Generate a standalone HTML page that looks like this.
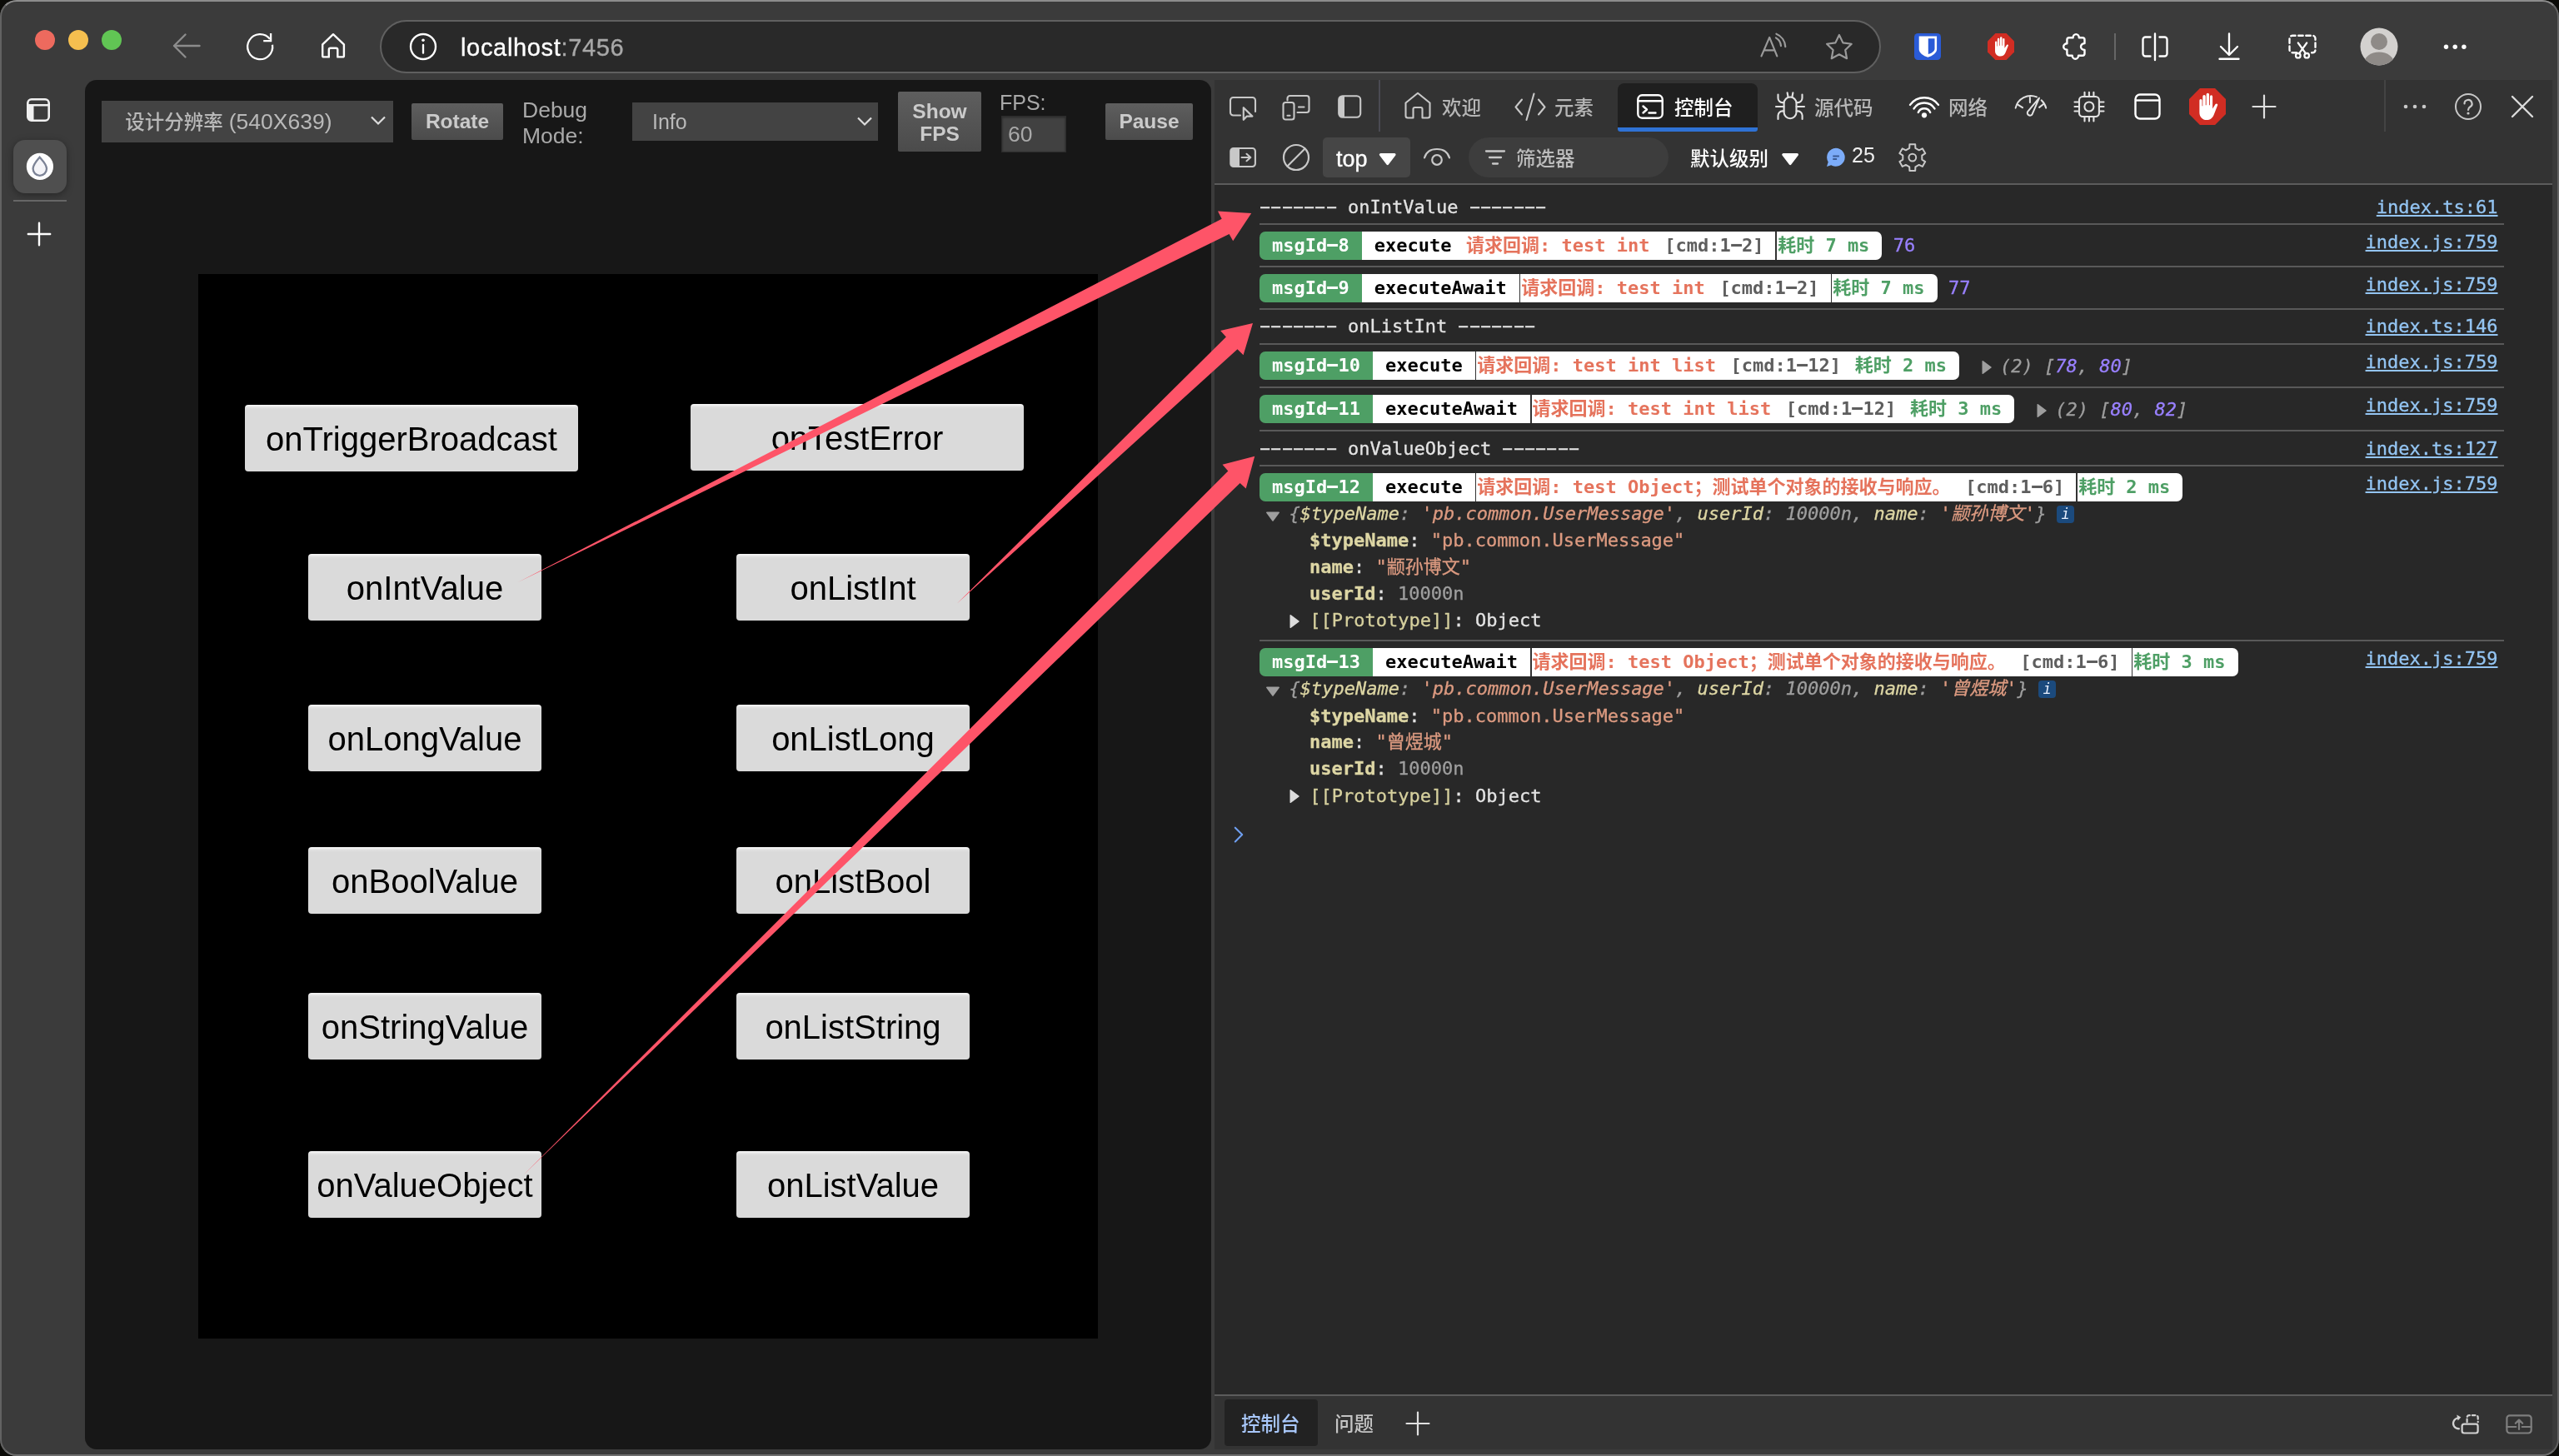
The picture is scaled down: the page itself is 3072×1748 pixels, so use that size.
<!DOCTYPE html>
<html lang="zh-CN">
<head>
<meta charset="utf-8">
<title>localhost:7456</title>
<style>
*{box-sizing:border-box;margin:0;padding:0}
html,body{width:3072px;height:1748px;overflow:hidden;background:#0b0b08}
body{position:relative;font-family:"Liberation Sans","Noto Sans CJK SC",sans-serif;color:#fff}
.abs{position:absolute}
#win{position:absolute;left:0;top:0;width:3072px;height:1748px;background:#3b3b3b;border-radius:20px;overflow:hidden}
#winborder{position:absolute;left:0;top:0;width:3072px;height:1748px;border-radius:20px;border:2px solid #626262;border-top-color:#8c8c8c;border-bottom-color:#6e6e6e;pointer-events:none;z-index:50}
/* ---------- browser chrome ---------- */
.tl{position:absolute;top:36px;width:24px;height:24px;border-radius:50%}
#urlbar{position:absolute;left:456px;top:24px;width:1802px;height:64px;border-radius:32px;background:#292929;border:2px solid #606060}
#urltext{position:absolute;will-change:transform;left:553px;top:36.600px;font-size:29px;line-height:40px;color:#fff;letter-spacing:.67px;-webkit-text-stroke:.35px currentColor}
#urltext span{color:#a8a8a8}
svg{position:absolute;overflow:visible}
.ic{fill:none;stroke:#fff;stroke-width:2.35;stroke-linecap:round;stroke-linejoin:round}
/* ---------- page ---------- */
#page{position:absolute;left:102px;top:96px;width:1352px;height:1644px;background:#171717;border-radius:14px;overflow:hidden}
#canvasbg{position:absolute;left:136px;top:233px;width:1080px;height:1278px;background:#000}
#canvas{position:absolute;left:136px;top:233.500px;width:1080px;height:1278px;will-change:transform}
.cbtn{position:absolute;height:80px;width:280px;background:linear-gradient(#f7f7f7 0,#f0f0f0 1.500px,#e0e0e0 3.500px,#dadada 6px,#dadada 100%);border-radius:4px;color:#000;font-size:40px;line-height:82px;text-align:center;font-family:"Liberation Sans",sans-serif;white-space:nowrap;overflow:hidden}
/* cocos toolbar */
.tb{position:absolute;will-change:transform;font-family:"Liberation Sans","Noto Sans CJK SC",sans-serif}
.tsel{background:#434343;color:#b9b9b9;font-size:25px}
.tbtn{background:linear-gradient(#5e5e5e,#4b4b4b);color:#cbcbcb;font-weight:bold;font-size:24.5px;text-align:center;border-radius:2px}
/* ---------- devtools ---------- */
#dt{position:absolute;left:1458px;top:96px;width:1606px;height:1644px;background:#282828;overflow:hidden}
#dttabs{position:absolute;left:0;top:0;width:100%;height:62px;background:#333}
#dtbar{position:absolute;left:0;top:62px;width:100%;height:64px;background:#333;border-bottom:2px solid #5c5c5c}
#dtbottom{position:absolute;left:0;top:1578px;width:100%;height:66px;background:#333;border-top:2px solid #5c5c5c}
.dtt{position:absolute;will-change:transform;font-size:23.5px;line-height:36px;margin-top:1.5px;font-weight:500;color:#c4c4c4;white-space:nowrap}
.dic{fill:none;stroke:#c8c8c8;stroke-width:2.1;stroke-linecap:round;stroke-linejoin:round}
/* console */
#con{position:absolute;left:0;top:0;width:100%;height:100%;will-change:transform;font-family:"DejaVu Sans Mono","Liberation Mono","Noto Sans CJK SC",monospace;font-size:22px;color:#e3e3e3}
.row{position:absolute;left:54px;width:1493px;border-bottom:2px solid #4a4a4a}
.ln{position:absolute;white-space:pre;line-height:32px;height:32px;-webkit-text-stroke:.3px currentColor}
.ln.b{-webkit-text-stroke:0}
.lk{color:#94c5f3;text-decoration:underline;white-space:pre;line-height:32px}
.b{font-weight:bold}
.hy{display:inline-block;transform:translateY(-0.600px) scaleX(1.900)}
.ibadge{width:21px;height:21px;border-radius:4px;background:#1b4a7d;color:#e8f0ff;font-style:italic;font-size:17px;line-height:21px;text-align:center;font-family:"DejaVu Sans Mono","Liberation Mono",monospace}
</style>
</head>
<body>
<div id="win">
<!-- CHROME -->
<div id="chrome">
<div class="tl" style="left:42px;background:#ed6a5e"></div>
<div class="tl" style="left:82px;background:#f5bf4f"></div>
<div class="tl" style="left:122px;background:#61c554"></div>
<svg style="left:200px;top:32px" width="48" height="48" viewBox="0 0 48 48"><path class="ic" style="stroke:#8c8c8c;stroke-width:2.4" d="M39.5 23H9M22.5 9.5L9 23l13.500 13.500"/></svg>
<svg style="left:288px;top:32px" width="48" height="48" viewBox="0 0 48 48"><path class="ic" style="stroke-width:2.300;stroke-linecap:butt;stroke-linejoin:miter" d="M39 21.800A15 15 0 1 1 36 14.900M37.100 8V17.100H28.200"/></svg>
<svg style="left:376px;top:32px" width="48" height="48" viewBox="0 0 48 48"><path class="ic" style="stroke-width:2.400" d="M11.200 21.300L24 9.200L36.900 21.300V34.900a1.500 1.500 0 0 1-1.500 1.500H29.300V27.800a2 2 0 0 0-2-2h-6.500a2 2 0 0 0-2 2V36.400H12.700a1.500 1.500 0 0 1-1.500-1.500Z"/></svg>
<div id="urlbar"></div>
<svg style="left:484px;top:32px" width="48" height="48" viewBox="0 0 48 48"><circle class="ic" cx="24" cy="24" r="15"/><path class="ic" d="M24 22v9.500"/><circle cx="24" cy="16.300" r="1.800" fill="#fff"/></svg>
<div id="urltext">localhost<span>:7456</span></div>
<!-- read aloud -->
<svg style="left:2104px;top:32px" width="48" height="48" viewBox="0 0 48 48"><path class="ic" style="stroke:#9a9a9a;stroke-width:2.200" d="M10.500 35.400L20.200 12.900L29.300 35.400M13.800 28.400H26.500M27.900 13.400A12.500 12.500 0 0 1 34 23.200M28.400 8.700A17.400 17.400 0 0 1 39.300 24.100"/></svg>
<!-- star -->
<svg style="left:2184px;top:32px" width="48" height="48" viewBox="0 0 48 48"><path class="ic" style="stroke:#9a9a9a;stroke-width:2.200" d="M23.90 10.00L28.43 19.37L38.74 20.78L31.22 27.98L33.07 38.22L23.90 33.30L14.73 38.22L16.58 27.98L9.06 20.78L19.37 19.37Z"/></svg>
<!-- bitwarden -->
<svg style="left:2298px;top:40px" width="32" height="32" viewBox="0 0 32 32"><rect width="32" height="32" rx="4.500" fill="#2a5bd7"/><path d="M5.700 3.500H27.100V19c0 4.500-5 8-10.700 9.800C10.700 27 5.700 23.500 5.700 19Z" fill="#fff"/><path d="M16.800 6.300H24.500V18.500c0 2.800-3.300 5.300-7.700 6.600Z" fill="#2a5bd7"/></svg>
<!-- adblock -->
<svg style="left:2386px;top:40px" width="32" height="32" viewBox="0 0 32 32"><path d="M9.400 0h13.200L32 9.400v13.200L22.600 32H9.400L0 22.600V9.400z" fill="#d12d23"/><path d="M9 16.500V10.600a1.150 1.150 0 0 1 2.300 0V15.500h.55V7a1.250 1.250 0 0 1 2.500 0V14.800h.65V5.400a1.250 1.250 0 0 1 2.500 0V14.800h.65V7.200a1.150 1.150 0 0 1 2.300 0V17.800l2.500-3.900c.7-1 2.400-.4 1.900.9L21.600 23c-1.200 3-3.300 4.600-6.400 4.600-3.600 0-6.200-2.700-6.200-6.600z" fill="#fff"/></svg>
<!-- puzzle -->
<svg style="left:2466px;top:32px" width="48" height="48" viewBox="0 0 48 48"><path class="ic" style="stroke-width:2.400" d="M17.900 13.300H22.600A3.600 4.200 0 0 1 29.800 13.300H34a2.500 2.500 0 0 1 2.500 2.500V20.100A4.500 3.900 0 0 0 36.500 27.900V32.200a2.500 2.500 0 0 1-2.500 2.500H29.100A3.700 4 0 0 1 21.700 34.700H17.900a2.500 2.500 0 0 1-2.500-2.500V27.600A4.200 3.700 0 0 1 15.400 20.200V15.800a2.500 2.500 0 0 1 2.500-2.500Z"/></svg>
<div class="abs" style="left:2538px;top:40px;width:2px;height:32px;background:#666"></div>
<!-- split -->
<svg style="left:2563px;top:32px" width="48" height="48" viewBox="0 0 48 48"><path class="ic" d="M18.500 12.500h-6a3 3 0 0 0-3 3v17a3 3 0 0 0 3 3h6M29.500 12.500h6a3 3 0 0 1 3 3v17a3 3 0 0 1-3 3h-6M24 8.500v31.500"/></svg>
<!-- download -->
<svg style="left:2652px;top:32px" width="48" height="48" viewBox="0 0 48 48"><path class="ic" d="M24 8.500v25M14 24l10 10 10-10M12.500 38.700h23"/></svg>
<!-- screenshot -->
<svg style="left:2740px;top:32px" width="48" height="48" viewBox="0 0 48 48"><path class="ic" stroke-dasharray="5.500 3.600" d="M17 31.200h-5a3.500 3.500 0 0 1-3.500-3.500v-13.500a3.500 3.500 0 0 1 3.500-3.500h24a3.500 3.500 0 0 1 3.500 3.500v13.500a3.500 3.500 0 0 1-3.500 3.500h-4"/><path class="ic" style="stroke-width:2.200" d="M18.800 19.500l9.300 12.800M29.200 19.500l-9.300 12.800"/><circle class="ic" style="stroke-width:2.200" cx="18.800" cy="34.700" r="2.800"/><circle class="ic" style="stroke-width:2.200" cx="29.200" cy="34.700" r="2.800"/></svg>
<!-- profile -->
<svg style="left:2833px;top:33px" width="46" height="46" viewBox="0 0 46 46"><defs><clipPath id="pc"><circle cx="23" cy="23" r="22.500"/></clipPath></defs><circle cx="23" cy="23" r="22.500" fill="#d3d1cf"/><g clip-path="url(#pc)" fill="#8e8a87"><circle cx="23" cy="17" r="10"/><ellipse cx="23" cy="44" rx="18.500" ry="14.500"/></g></svg>
<svg style="left:2923px;top:32px" width="48" height="48" viewBox="0 0 48 48"><circle cx="13.500" cy="24.200" r="2.700" fill="#fff"/><circle cx="24.200" cy="24.200" r="2.700" fill="#fff"/><circle cx="34.900" cy="24.200" r="2.700" fill="#fff"/></svg>
</div>
<!-- SIDEBAR -->
<div id="side">
<svg style="left:32px;top:118px" width="28" height="28" viewBox="0 0 28 28"><rect x="1.300" y="1.300" width="25.400" height="25.400" rx="4.500" fill="none" stroke="#f0f0f0" stroke-width="2.600"/><path d="M1.300 8.300h25.400" stroke="#f0f0f0" stroke-width="2.600"/><path d="M1.300 8.300h7.200v18.400H5.800a4.500 4.500 0 0 1-4.500-4.500z" fill="#f0f0f0"/></svg>
<div class="abs" style="left:16px;top:168px;width:64px;height:64px;border-radius:14px;background:#4f4f4f;box-shadow:0 2px 8px rgba(0,0,0,.35)"></div>
<svg style="left:32px;top:184px" width="32" height="32" viewBox="0 0 32 32"><circle cx="15.900" cy="15.900" r="16.100" fill="#fdfdfe"/><path d="M15.600 4.800C19.500 9.300 24 13.600 24 18.600a8.200 8.200 0 0 1-16.400 0C7.600 13.600 11.700 9.300 15.600 4.800z" fill="#f4f4f8" stroke="#7c8396" stroke-width="2.300"/></svg>
<div class="abs" style="left:16px;top:240px;width:64px;height:2px;background:#666"></div>
<svg style="left:33px;top:267px" width="28" height="28" viewBox="0 0 28 28"><path d="M14 0.800v26.400M0.800 14h26.400" stroke="#fff" stroke-width="2.400" stroke-linecap="round"/></svg>
</div>
<!-- PAGE -->
<div id="page">
<div id="ctool">
<div class="tb tsel" style="left:20px;top:25px;width:350px;height:50px;line-height:50px;padding-left:28.300px;white-space:nowrap"><span style="font-size:23.500px;font-weight:500">设计分辨率</span> <span style="font-size:26.500px">(540X639)</span></div>
<svg style="left:342px;top:42px" width="20" height="14" viewBox="0 0 20 14"><path d="M2 2.500l8 8 8-8" fill="none" stroke="#ddd" stroke-width="2.200"/></svg>
<div class="tb tbtn" style="left:392px;top:28px;width:110px;height:44px;line-height:44px">Rotate</div>
<div class="tb" style="left:525px;top:21px;font-size:26.500px;line-height:30.500px;color:#a9a9a9">Debug<br>Mode:</div>
<div class="tb tsel" style="left:657px;top:27px;width:295px;height:46px;line-height:46px;padding-left:24px">Info</div>
<svg style="left:926px;top:43px" width="20" height="14" viewBox="0 0 20 14"><path d="M2 2.500l8 8 8-8" fill="none" stroke="#ddd" stroke-width="2.200"/></svg>
<div class="tb tbtn" style="left:976px;top:14px;width:100px;height:72px;line-height:27px;padding-top:9.500px">Show<br>FPS</div>
<div class="tb" style="left:1098px;top:12px;font-size:25px;line-height:30px;color:#a9a9a9">FPS:</div>
<div class="tb" style="left:1100px;top:43px;width:78px;height:44px;background:#414141;border:1px solid #2c2c2c;box-shadow:inset 0 1px 3px rgba(0,0,0,.4);color:#a9a9a9;font-size:26.500px;line-height:42px;padding-left:7px">60</div>
<div class="tb tbtn" style="left:1225px;top:28px;width:105px;height:44px;line-height:44px">Pause</div>
</div>
<div id="canvasbg"></div>
<div id="canvas">
<div class="cbtn" style="left:56px;top:156px;width:400px">onTriggerBroadcast</div>
<div class="cbtn" style="left:591px;top:155px;width:400px">onTestError</div>
<div class="cbtn" style="left:132px;top:335px;width:280px">onIntValue</div>
<div class="cbtn" style="left:646px;top:335px;width:280px">onListInt</div>
<div class="cbtn" style="left:132px;top:516px;width:280px">onLongValue</div>
<div class="cbtn" style="left:646px;top:516px;width:280px">onListLong</div>
<div class="cbtn" style="left:132px;top:687px;width:280px">onBoolValue</div>
<div class="cbtn" style="left:646px;top:687px;width:280px">onListBool</div>
<div class="cbtn" style="left:132px;top:862px;width:280px">onStringValue</div>
<div class="cbtn" style="left:646px;top:862px;width:280px">onListString</div>
<div class="cbtn" style="left:132px;top:1052px;width:280px">onValueObject</div>
<div class="cbtn" style="left:646px;top:1052px;width:280px">onListValue</div>
</div>
</div>
<!-- DEVTOOLS -->
<div id="dt">
<div id="dttabs">
<svg style="left:16px;top:16px" width="36" height="36" viewBox="0 0 36 36"><path class="dic" d="M15 26.500H6.500a3.500 3.500 0 0 1-3.500-3.500V8.500a3.500 3.500 0 0 1 3.500-3.500h23a3.500 3.500 0 0 1 3.500 3.500V22"/><path class="dic" style="stroke-width:2.200" d="M18.800 17.200v14.600l4-4.200h6.600z"/></svg>
<svg style="left:80px;top:16px" width="36" height="36" viewBox="0 0 36 36"><path class="dic" d="M7.500 8.500V6a3 3 0 0 1 3-3h20a3 3 0 0 1 3 3v14a3 3 0 0 1-3 3H19.500M21 16.500h6.500"/><rect class="dic" x="2.500" y="11" width="13" height="20.500" rx="2.800"/><path class="dic" d="M7.500 26.800h3"/></svg>
<svg style="left:146px;top:16px" width="32" height="32" viewBox="0 0 32 32"><rect class="dic" x="3.200" y="3.200" width="26" height="25.600" rx="4.500"/><path d="M3.200 7.700a4.500 4.500 0 0 1 4.500-4.500h2.300v25.600H7.700a4.500 4.500 0 0 1-4.500-4.500z" fill="#c8c8c8"/></svg>
<div class="abs" style="left:197px;top:0;width:2px;height:62px;background:#4a4a52"></div>
<svg style="left:226px;top:12px" width="36" height="36" viewBox="0 0 36 36"><path class="dic" d="M3.500 15.500L18 3.800l14.500 11.700V31a2.500 2.500 0 0 1-2.500 2.500h-6.500V23a2 2 0 0 0-2-2h-7a2 2 0 0 0-2 2v10.500H6A2.500 2.500 0 0 1 3.500 31z"/></svg>
<div class="dtt" style="left:273px;top:14px;font-size:23.5px;color:#b6b6b6;">欢迎</div>
<svg style="left:359px;top:14px" width="40" height="36" viewBox="0 0 40 36"><path class="dic" d="M10 9.500L2.500 18.500l7.500 9M30 9.500l7.500 9-7.500 9M24.500 2.500L15.500 34"/></svg>
<div class="dtt" style="left:408px;top:14px;font-size:23.5px;color:#b6b6b6;">元素</div>
<div class="abs" style="left:484px;top:4px;width:168px;height:58px;background:#1f1f1f;border-radius:8px 8px 3px 3px;overflow:hidden"><div class="abs" style="left:0;bottom:0;width:100%;height:5px;background:#2f72d4"></div></div>
<svg style="left:506px;top:16px" width="34" height="32" viewBox="0 0 34 32"><rect x="2.300" y="2.300" width="29.400" height="27.400" rx="5" fill="none" stroke="#fff" stroke-width="2.400"/><path d="M2.300 9.300h29.400M8.500 15.500l4.500 4-4.500 4M15.500 23.500h8" fill="none" stroke="#fff" stroke-width="2.400" stroke-linecap="round" stroke-linejoin="round"/></svg>
<div class="dtt" style="left:552px;top:14px;font-size:23.5px;color:#fff;">控制台</div>
<svg style="left:672px;top:14px" width="38" height="36" viewBox="0 0 38 36"><g fill="none" stroke="#e2e2e2" stroke-width="2.100" stroke-linecap="round" stroke-linejoin="round"><rect x="11.600" y="6.500" width="14.900" height="25.700" rx="7.450"/><path d="M15.600 1.200L16.500 6M22.400 1.200L21.500 6M4.500 3.500V7.800a5.300 5.300 0 0 0 5.300 5.300H11.500M33.500 3.500V7.800a5.300 5.300 0 0 1-5.300 5.300H26.600M2 18H11.500M26.600 18H36M11.500 23.400H9.800a5.300 5.300 0 0 0-5.300 5.300V33M26.600 23.400h1.700a5.300 5.300 0 0 1 5.300 5.300V33"/></g></svg>
<div class="dtt" style="left:720px;top:14px;font-size:23.5px;color:#b6b6b6;">源代码</div>
<svg style="left:832px;top:16px" width="40" height="32" viewBox="0 0 40 32"><path fill="none" stroke="#fff" stroke-width="2.400" stroke-linecap="round" d="M3.01 13.86A21 21 0 0 1 36.99 13.86M7.53 18.41A14.7 14.7 0 0 1 32.47 18.41M12.78 22.99A7.9 7.9 0 0 1 27.22 22.99"/><circle cx="20" cy="26.300" r="3.100" fill="#fff"/></svg>
<div class="dtt" style="left:881px;top:14px;font-size:23.5px;color:#b6b6b6;">网络</div>
<svg style="left:960px;top:16px" width="40" height="30" viewBox="0 0 40 30"><g fill="none" stroke="#e2e2e2" stroke-width="2" stroke-linecap="round" stroke-linejoin="round"><path d="M1.650 17.650A18.660 18.660 0 0 1 27 4.400M32.600 8.300A18.660 18.660 0 0 1 38.200 17.650M4.700 13.800L10 17.100M18.900 4.700V11M30.100 16.900L35.400 12.800"/><path d="M30 5.600L16.300 21.800A3.100 3.100 0 1 0 21.600 25.200Z"/></g></svg>
<svg style="left:1031px;top:13px" width="38" height="38" viewBox="0 0 38 38"><g fill="none" stroke="#e2e2e2" stroke-width="2.100" stroke-linecap="round"><rect x="7" y="7" width="23.900" height="24" rx="4.200"/><circle cx="18.900" cy="19" r="5.500"/><path d="M13.500 6V1.800M18.900 6V1.800M24.400 6V1.800M13.500 36.400V32M18.900 36.400V32M24.400 36.400V32M6 13.500H1.500M6 19H1.500M6 24.500H1.500M36.500 13.500H32M36.500 19H32M36.500 24.500H32"/></g></svg>
<svg style="left:1103px;top:15px" width="34" height="34" viewBox="0 0 34 34"><rect x="2.500" y="2.500" width="29" height="29" rx="5.500" fill="none" stroke="#fff" stroke-width="2.400"/><path d="M2.500 9.500h29" stroke="#fff" stroke-width="2.400"/></svg>
<svg style="left:1170px;top:10px" width="44" height="44" viewBox="0 0 32 32"><path d="M9.400 0h13.200L32 9.400v13.200L22.600 32H9.400L0 22.600V9.400z" fill="#d12d23"/><path d="M9 16.500V10.600a1.150 1.150 0 0 1 2.300 0V15.500h.55V7a1.250 1.250 0 0 1 2.500 0V14.800h.65V5.400a1.250 1.250 0 0 1 2.500 0V14.800h.65V7.200a1.150 1.150 0 0 1 2.300 0V17.800l2.500-3.900c.7-1 2.400-.4 1.900.9L21.600 23c-1.200 3-3.300 4.600-6.400 4.600-3.600 0-6.200-2.700-6.200-6.600z" fill="#fff"/></svg>
<svg style="left:1245px;top:17px" width="30" height="30" viewBox="0 0 30 30"><path d="M15 1.500v27M1.500 15h27" stroke="#e0e0e0" stroke-width="2.200" stroke-linecap="round"/></svg>
<div class="abs" style="left:1404px;top:0;width:2px;height:62px;background:#444"></div>
<svg style="left:1426px;top:22px" width="30" height="20" viewBox="0 0 30 20"><circle cx="4" cy="10" r="2.300" fill="#c8c8c8"/><circle cx="15" cy="10" r="2.300" fill="#c8c8c8"/><circle cx="26" cy="10" r="2.300" fill="#c8c8c8"/></svg>
<svg style="left:1488px;top:15px" width="34" height="34" viewBox="0 0 34 34"><circle class="dic" style="stroke-width:2" cx="17" cy="17" r="15"/><path class="dic" style="stroke-width:2.200" d="M12.500 13.500a4.500 4.500 0 1 1 6.800 3.800c-1.600 1-2.300 1.800-2.300 3.700"/><circle cx="17" cy="25" r="1.600" fill="#c8c8c8"/></svg>
<svg style="left:1555px;top:18px" width="28" height="28" viewBox="0 0 28 28"><path d="M3 2l24 24M27 2L3 26" stroke="#dcdcdc" stroke-width="2.400" stroke-linecap="round"/></svg>
</div>
<div id="dtbar">
<svg style="left:16px;top:16px" width="36" height="30" viewBox="0 0 36 30"><rect class="dic" x="3.300" y="4" width="29.600" height="22" rx="3.500"/><path d="M3.300 7.500a3.500 3.500 0 0 1 3.500-3.500H14v22H6.800a3.500 3.500 0 0 1-3.500-3.500z" fill="#c8c8c8"/><path class="dic" d="M16.500 15h10.500M22.500 10.800L27.300 15l-4.800 4.200"/></svg>
<svg style="left:80px;top:13px" width="36" height="36" viewBox="0 0 36 36"><circle class="dic" style="stroke-width:2.200" cx="18" cy="18" r="15"/><path class="dic" style="stroke-width:2.200" d="M7.500 28.500L28.500 7.500"/></svg>
<div class="abs" style="left:130px;top:7px;width:105px;height:48px;background:#464646;border-radius:5px"></div>
<div class="dtt" style="left:146px;top:13px;font-size:27px;line-height:36px;color:#fff;-webkit-text-stroke:.35px #fff">top</div>
<svg style="left:196px;top:25px" width="24" height="18" viewBox="0 0 24 18"><path d="M3.300 2.600h16.800l-8.400 11z" fill="#fff" stroke="#fff" stroke-width="3" stroke-linejoin="round"/></svg>
<svg style="left:249px;top:16px" width="36" height="30" viewBox="0 0 36 30"><path class="dic" style="stroke-width:2.200" d="M3 15.500C5 8.500 11 5 18 5s13 3.500 15 10.500"/><circle class="dic" style="stroke-width:2.200" cx="18" cy="18" r="5.800"/></svg>
<div class="abs" style="left:305px;top:7px;width:240px;height:48px;background:#3d3d3d;border-radius:24px"></div>
<svg style="left:324px;top:18px" width="26" height="26" viewBox="0 0 26 26"><path class="dic" style="stroke-width:2.300" d="M2 5.500h22M6 13h14M10 20.500h6"/></svg>
<div class="dtt" style="left:362px;top:13px;color:#bcbcbc">筛选器</div>
<div class="dtt" style="left:571px;top:13px;color:#fff">默认级别</div>
<svg style="left:679px;top:25px" width="24" height="18" viewBox="0 0 24 18"><path d="M3.700 2.600h16.800l-8.400 11z" fill="#fff" stroke="#fff" stroke-width="3" stroke-linejoin="round"/></svg>
<svg style="left:733px;top:18px" width="26" height="26" viewBox="0 0 26 26"><path d="M12.800 1.800a11 11 0 1 1-5.600 20.500L2 24l1.700-5.500A11 11 0 0 1 12.800 1.800z" fill="#7cacf8"/><path d="M9.300 11.500h7.600M9.300 15h4.800" stroke="#3b5b93" stroke-width="1.800"/></svg>
<div class="dtt" style="left:765px;top:8.5px;font-size:25px;color:#efefef">25</div>
<svg style="left:818px;top:11px" width="40" height="40" viewBox="0 0 40 40"><path class="dic" style="stroke-width:2" d="M16.2 8.9L16.4 4.3L23.2 4.3L23.4 8.9L27.7 11.3L31.8 9.3L35.2 15.1L31.3 17.6L31.3 22.6L35.2 25.1L31.8 30.9L27.7 28.9L23.4 31.3L23.2 35.9L16.4 35.9L16.2 31.3L11.9 28.9L7.8 30.9L4.4 25.1L8.3 22.6L8.3 17.6L4.4 15.1L7.8 9.3L11.9 11.3z"/><circle class="dic" style="stroke-width:2" cx="19.800" cy="20.100" r="4.400"/></svg>
</div>
<div id="con">
<span class="ln " style="left:54.00px;top:136.50px;"><span class="hy">-</span><span class="hy">-</span><span class="hy">-</span><span class="hy">-</span><span class="hy">-</span><span class="hy">-</span><span class="hy">-</span> onIntValue <span class="hy">-</span><span class="hy">-</span><span class="hy">-</span><span class="hy">-</span><span class="hy">-</span><span class="hy">-</span><span class="hy">-</span></span>
<span class="ln lk" style="left:1394.82px;top:136.50px;">index.ts:61</span>
<div class="abs" style="left:54.00px;top:172.00px;width:1494.00px;height:2.00px;background:#595959"></div>
<div class="abs" style="left:54.00px;top:182.00px;width:124.71px;height:34.00px;background:#4e9f65;border-radius:7px 0 0 7px"></div>
<span class="ln b" style="left:69.00px;top:182.90px;color:#fff">msgId<span class="hy">-</span>8</span>
<div class="abs" style="left:176.71px;top:182.00px;width:624.64px;height:34.00px;background:#fff;border-radius:0 7px 7px 0"></div>
<span class="ln b" style="left:191.71px;top:182.90px;color:#000">execute</span>
<span class="ln b" style="left:302.12px;top:182.90px;color:#e5735c">请求回调: test int</span>
<span class="ln b" style="left:540.16px;top:182.90px;color:#5e5e5e">[cmd:1<span class="hy">-</span>2]</span>
<div class="abs" style="left:673.45px;top:182.00px;width:1.30px;height:34.00px;background:#333"></div>
<span class="ln b" style="left:676.15px;top:182.90px;color:#4e9f65">耗时 7 ms</span>
<span class="ln lk" style="left:1381.57px;top:178.60px;">index.js:759</span>
<span class="ln " style="left:814.85px;top:182.90px;color:#9980ff">76</span>
<div class="abs" style="left:54.00px;top:223.00px;width:1494.00px;height:2.00px;background:#595959"></div>
<div class="abs" style="left:54.00px;top:233.00px;width:124.71px;height:34.00px;background:#4e9f65;border-radius:7px 0 0 7px"></div>
<span class="ln b" style="left:69.00px;top:233.90px;color:#fff">msgId<span class="hy">-</span>9</span>
<div class="abs" style="left:176.71px;top:233.00px;width:690.86px;height:34.00px;background:#fff;border-radius:0 7px 7px 0"></div>
<span class="ln b" style="left:191.71px;top:233.90px;color:#000">executeAwait</span>
<div class="abs" style="left:366.14px;top:233.00px;width:1.30px;height:34.00px;background:#333"></div>
<span class="ln b" style="left:368.34px;top:233.90px;color:#e5735c">请求回调: test int</span>
<span class="ln b" style="left:606.38px;top:233.90px;color:#5e5e5e">[cmd:1<span class="hy">-</span>2]</span>
<div class="abs" style="left:739.67px;top:233.00px;width:1.30px;height:34.00px;background:#333"></div>
<span class="ln b" style="left:742.37px;top:233.90px;color:#4e9f65">耗时 7 ms</span>
<span class="ln lk" style="left:1381.57px;top:229.60px;">index.js:759</span>
<span class="ln " style="left:881.07px;top:233.90px;color:#9980ff">77</span>
<div class="abs" style="left:54.00px;top:274.00px;width:1494.00px;height:2.00px;background:#595959"></div>
<span class="ln " style="left:54.00px;top:279.75px;"><span class="hy">-</span><span class="hy">-</span><span class="hy">-</span><span class="hy">-</span><span class="hy">-</span><span class="hy">-</span><span class="hy">-</span> onListInt <span class="hy">-</span><span class="hy">-</span><span class="hy">-</span><span class="hy">-</span><span class="hy">-</span><span class="hy">-</span><span class="hy">-</span></span>
<span class="ln lk" style="left:1381.57px;top:279.75px;">index.ts:146</span>
<div class="abs" style="left:54.00px;top:316.00px;width:1494.00px;height:2.00px;background:#595959"></div>
<div class="abs" style="left:54.00px;top:326.00px;width:137.95px;height:34.00px;background:#4e9f65;border-radius:7px 0 0 7px"></div>
<span class="ln b" style="left:69.00px;top:326.90px;color:#fff">msgId<span class="hy">-</span>10</span>
<div class="abs" style="left:189.95px;top:326.00px;width:704.11px;height:34.00px;background:#fff;border-radius:0 7px 7px 0"></div>
<span class="ln b" style="left:204.95px;top:326.90px;color:#000">execute</span>
<div class="abs" style="left:313.16px;top:326.00px;width:1.30px;height:34.00px;background:#333"></div>
<span class="ln b" style="left:315.36px;top:326.90px;color:#e5735c">请求回调: test int list</span>
<span class="ln b" style="left:619.62px;top:326.90px;color:#5e5e5e">[cmd:1<span class="hy">-</span>12]</span>
<span class="ln b" style="left:768.86px;top:326.90px;color:#4e9f65">耗时 2 ms</span>
<span class="ln lk" style="left:1381.57px;top:322.60px;">index.js:759</span>
<svg style="left:919.56px;top:336.40px" width="14" height="18" viewBox="0 0 14 18"><path d="M1.500 1.800v14.400a.8.8 0 0 0 1.300.6l9.700-7.200a.8.8 0 0 0 0-1.200L2.800 1.200a.8.8 0 0 0-1.300.6z" fill="#9e9e9e"/></svg>
<span class="ln " style="left:943.06px;top:328.40px;"><i style="color:#9e9e9e">(2) [<span style="color:#9980ff">78</span>, <span style="color:#9980ff">80</span>]</i></span>
<div class="abs" style="left:54.00px;top:368.00px;width:1494.00px;height:2.00px;background:#595959"></div>
<div class="abs" style="left:54.00px;top:378.00px;width:137.95px;height:34.00px;background:#4e9f65;border-radius:7px 0 0 7px"></div>
<span class="ln b" style="left:69.00px;top:378.90px;color:#fff">msgId<span class="hy">-</span>11</span>
<div class="abs" style="left:189.95px;top:378.00px;width:770.33px;height:34.00px;background:#fff;border-radius:0 7px 7px 0"></div>
<span class="ln b" style="left:204.95px;top:378.90px;color:#000">executeAwait</span>
<div class="abs" style="left:379.38px;top:378.00px;width:1.30px;height:34.00px;background:#333"></div>
<span class="ln b" style="left:381.58px;top:378.90px;color:#e5735c">请求回调: test int list</span>
<span class="ln b" style="left:685.84px;top:378.90px;color:#5e5e5e">[cmd:1<span class="hy">-</span>12]</span>
<span class="ln b" style="left:835.08px;top:378.90px;color:#4e9f65">耗时 3 ms</span>
<span class="ln lk" style="left:1381.57px;top:374.60px;">index.js:759</span>
<svg style="left:985.78px;top:388.40px" width="14" height="18" viewBox="0 0 14 18"><path d="M1.500 1.800v14.400a.8.8 0 0 0 1.300.6l9.700-7.200a.8.8 0 0 0 0-1.200L2.800 1.200a.8.8 0 0 0-1.300.6z" fill="#9e9e9e"/></svg>
<span class="ln " style="left:1009.28px;top:380.40px;"><i style="color:#9e9e9e">(2) [<span style="color:#9980ff">80</span>, <span style="color:#9980ff">82</span>]</i></span>
<div class="abs" style="left:54.00px;top:420.00px;width:1494.00px;height:2.00px;background:#595959"></div>
<span class="ln " style="left:54.00px;top:426.50px;"><span class="hy">-</span><span class="hy">-</span><span class="hy">-</span><span class="hy">-</span><span class="hy">-</span><span class="hy">-</span><span class="hy">-</span> onValueObject <span class="hy">-</span><span class="hy">-</span><span class="hy">-</span><span class="hy">-</span><span class="hy">-</span><span class="hy">-</span><span class="hy">-</span></span>
<span class="ln lk" style="left:1381.57px;top:426.50px;">index.ts:127</span>
<div class="abs" style="left:54.00px;top:462.00px;width:1494.00px;height:2.00px;background:#595959"></div>
<div class="abs" style="left:54.00px;top:472.00px;width:137.95px;height:34.00px;background:#4e9f65;border-radius:7px 0 0 7px"></div>
<span class="ln b" style="left:69.00px;top:472.90px;color:#fff">msgId<span class="hy">-</span>12</span>
<div class="abs" style="left:189.95px;top:472.00px;width:972.38px;height:34.00px;background:#fff;border-radius:0 7px 7px 0"></div>
<span class="ln b" style="left:204.95px;top:472.90px;color:#000">execute</span>
<div class="abs" style="left:313.16px;top:472.00px;width:1.30px;height:34.00px;background:#333"></div>
<span class="ln b" style="left:315.36px;top:472.90px;color:#e5735c">请求回调: test Object；测试单个对象的接收与响应。</span>
<span class="ln b" style="left:901.13px;top:472.90px;color:#5e5e5e">[cmd:1<span class="hy">-</span>6]</span>
<div class="abs" style="left:1034.43px;top:472.00px;width:1.30px;height:34.00px;background:#333"></div>
<span class="ln b" style="left:1037.13px;top:472.90px;color:#4e9f65">耗时 2 ms</span>
<span class="ln lk" style="left:1381.57px;top:468.60px;">index.js:759</span>
<svg style="left:60.50px;top:517.00px" width="18" height="14" viewBox="0 0 18 14"><path d="M1.800 1.500h14.400a.8.8 0 0 1 .6 1.300l-7.200 9.700a.8.8 0 0 1-1.200 0L1.200 2.800a.8.8 0 0 1 .6-1.300z" fill="#9e9e9e"/></svg>
<span class="ln " style="left:89.50px;top:504.80px;"><i style="color:#9e9e9e">{<span style="color:#ddd6a4">$typeName</span>: <span style="color:#dc9a80">'pb.common.UserMessage'</span>, <span style="color:#ddd6a4">userId</span>: 10000n, <span style="color:#ddd6a4">name</span>: <span style="color:#dc9a80">'颛孙博文'</span>}</i></span>
<div class="abs ibadge" style="left:1011.13px;top:511.00px">i</div>
<span class="ln " style="left:114.00px;top:537.30px;"><b style="color:#ddd6a4">$typeName</b>: <span style="color:#dc9a80">"pb.common.UserMessage"</span></span>
<span class="ln " style="left:114.00px;top:568.90px;"><b style="color:#ddd6a4">name</b>: <span style="color:#dc9a80">"颛孙博文"</span></span>
<span class="ln " style="left:114.00px;top:601.00px;"><b style="color:#ddd6a4">userId</b>: <span style="color:#9e9e9e">10000n</span></span>
<svg style="left:89.00px;top:640.65px" width="14" height="18" viewBox="0 0 14 18"><path d="M1.500 1.800v14.400a.8.8 0 0 0 1.300.6l9.700-7.200a.8.8 0 0 0 0-1.200L2.800 1.200a.8.8 0 0 0-1.300.6z" fill="#dcdcdc"/></svg>
<span class="ln " style="left:114.30px;top:633.15px;"><span style="color:#d6d09e">[[Prototype]]</span>: Object</span>
<div class="abs" style="left:54.00px;top:672.00px;width:1494.00px;height:2.00px;background:#595959"></div>
<div class="abs" style="left:54.00px;top:682.00px;width:137.95px;height:34.00px;background:#4e9f65;border-radius:7px 0 0 7px"></div>
<span class="ln b" style="left:69.00px;top:682.90px;color:#fff">msgId<span class="hy">-</span>13</span>
<div class="abs" style="left:189.95px;top:682.00px;width:1038.60px;height:34.00px;background:#fff;border-radius:0 7px 7px 0"></div>
<span class="ln b" style="left:204.95px;top:682.90px;color:#000">executeAwait</span>
<div class="abs" style="left:379.38px;top:682.00px;width:1.30px;height:34.00px;background:#333"></div>
<span class="ln b" style="left:381.58px;top:682.90px;color:#e5735c">请求回调: test Object；测试单个对象的接收与响应。</span>
<span class="ln b" style="left:967.35px;top:682.90px;color:#5e5e5e">[cmd:1<span class="hy">-</span>6]</span>
<div class="abs" style="left:1100.65px;top:682.00px;width:1.30px;height:34.00px;background:#333"></div>
<span class="ln b" style="left:1103.35px;top:682.90px;color:#4e9f65">耗时 3 ms</span>
<span class="ln lk" style="left:1381.57px;top:678.60px;">index.js:759</span>
<svg style="left:60.50px;top:727.00px" width="18" height="14" viewBox="0 0 18 14"><path d="M1.800 1.500h14.400a.8.8 0 0 1 .6 1.300l-7.200 9.700a.8.8 0 0 1-1.200 0L1.200 2.800a.8.8 0 0 1 .6-1.300z" fill="#9e9e9e"/></svg>
<span class="ln " style="left:89.50px;top:715.20px;"><i style="color:#9e9e9e">{<span style="color:#ddd6a4">$typeName</span>: <span style="color:#dc9a80">'pb.common.UserMessage'</span>, <span style="color:#ddd6a4">userId</span>: 10000n, <span style="color:#ddd6a4">name</span>: <span style="color:#dc9a80">'曾煜城'</span>}</i></span>
<div class="abs ibadge" style="left:989.13px;top:721.00px">i</div>
<span class="ln " style="left:114.00px;top:747.70px;"><b style="color:#ddd6a4">$typeName</b>: <span style="color:#dc9a80">"pb.common.UserMessage"</span></span>
<span class="ln " style="left:114.00px;top:779.30px;"><b style="color:#ddd6a4">name</b>: <span style="color:#dc9a80">"曾煜城"</span></span>
<span class="ln " style="left:114.00px;top:811.40px;"><b style="color:#ddd6a4">userId</b>: <span style="color:#9e9e9e">10000n</span></span>
<svg style="left:89.00px;top:851.05px" width="14" height="18" viewBox="0 0 14 18"><path d="M1.500 1.800v14.400a.8.8 0 0 0 1.300.6l9.700-7.200a.8.8 0 0 0 0-1.200L2.800 1.200a.8.8 0 0 0-1.300.6z" fill="#dcdcdc"/></svg>
<span class="ln " style="left:114.30px;top:843.55px;"><span style="color:#d6d09e">[[Prototype]]</span>: Object</span>
<svg style="left:22px;top:894px" width="16" height="24" viewBox="0 0 16 24"><path d="M2.800 3.700l8.400 8.350L2.800 20.400" fill="none" stroke="#6f9ff0" stroke-width="2.100" stroke-linecap="round" stroke-linejoin="round"/></svg>
</div>
<div id="dtbottom">
<div class="abs" style="left:12px;top:4px;width:112px;height:56px;background:#222;border-radius:4px"></div>
<div class="dtt" style="left:32px;top:14px;color:#a8c7fa">控制台</div>
<div class="dtt" style="left:144px;top:14px;color:#c4c4c4">问题</div>
<svg style="left:229px;top:18px" width="30" height="30" viewBox="0 0 30 30"><path d="M15 1.500v27M1.500 15h27" stroke="#e0e0e0" stroke-width="2.200" stroke-linecap="round"/></svg>
<svg style="left:1484px;top:19px" width="36" height="28" viewBox="0 0 36 28"><g fill="none" stroke="#d2d2d2" stroke-width="2.200" stroke-linecap="round" stroke-linejoin="round"><path d="M10 20.300C4.500 20 1.800 15.500 3.500 11.500C4.600 9 7 7.600 9.300 7.400"/><path d="M19.600 12.300V6.700a2.500 2.500 0 0 1 2.500-2.500h8.100a2.500 2.500 0 0 1 2.500 2.500V12.300" stroke-dasharray="3.600 3"/><rect x="13.600" y="14.700" width="19" height="10.800" rx="2.500"/></g><path d="M7.300 3.600L12.300 6.500L8.600 10.600z" fill="#d2d2d2"/></svg>
<svg style="left:1548px;top:19px" width="36" height="28" viewBox="0 0 36 28"><g fill="none" stroke="#7e7e7e" stroke-width="2.200" stroke-linecap="round" stroke-linejoin="round"><rect x="3.400" y="4.300" width="29.300" height="21.200" rx="3.500"/><path d="M3.400 18H14.300M21.700 18H32.700M18 21V9.800M13.800 13.800L18 9.600l4.200 4.200"/></g></svg>
</div>
</div>
<!-- ARROWS -->
<svg id="arrows" style="left:0;top:0" width="3072" height="1748" viewBox="0 0 3072 1748"><polygon fill="#fe5468" points="621.3,699.3 1466.7,262.7 1462.0,253.6 1502.2,256.1 1480.2,289.2 1475.6,281.0"/><polygon fill="#fe5468" points="1148.4,725.0 1471.9,404.4 1465.1,397.0 1504.0,387.9 1492.6,426.3 1485.5,419.2"/><polygon fill="#fe5468" points="628.2,1410.7 1474.3,565.5 1467.5,557.7 1506.2,547.8 1495.7,586.5 1488.6,580.0"/></svg>
</div>
<div id="winborder"></div>
</body>
</html>
